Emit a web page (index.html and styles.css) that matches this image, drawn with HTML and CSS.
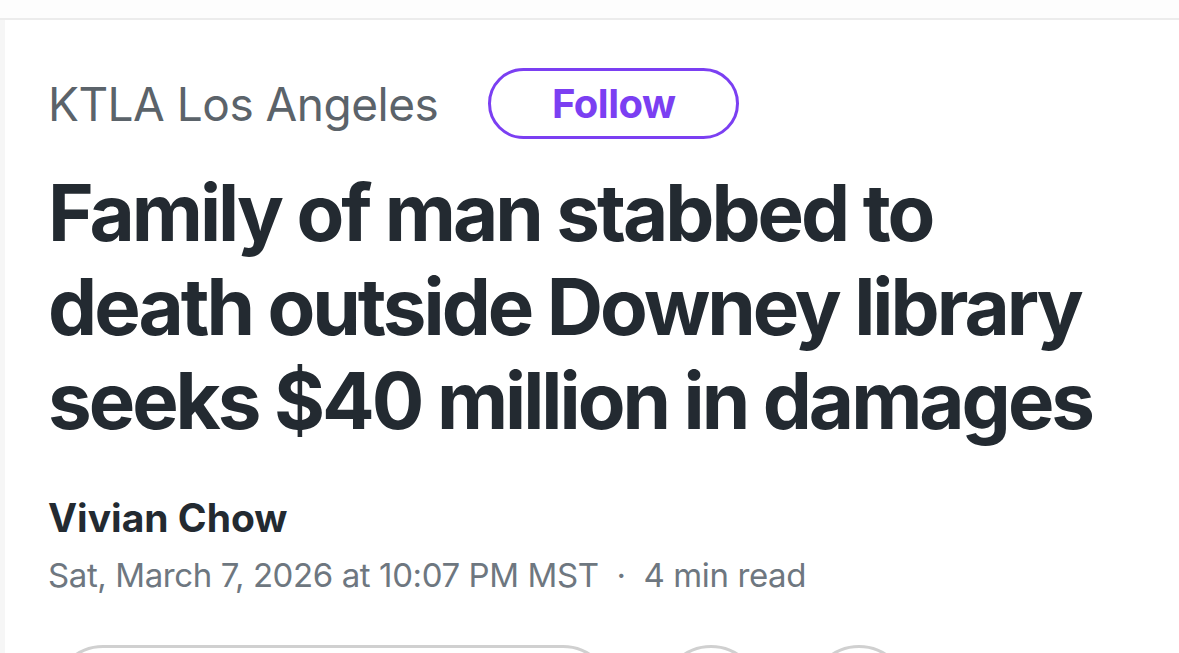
FILE: index.html
```html
<!DOCTYPE html>
<html lang="en">
<head>
  <meta charset="UTF-8">
  <title>Family of man stabbed to death outside Downey library - KTLA</title>
  <link rel="stylesheet" href="styles.css">
</head>
<body>

  <div class="top-bar"></div>

  <div class="article">
    <div class="provider">
      <span class="provider-name">KTLA Los Angeles</span>
      <button class="follow-btn">Follow</button>
    </div>

    <h1 class="headline">Family of man stabbed to death outside Downey library seeks $40 million in damages</h1>

    <div class="byline">
      <div class="author">Vivian Chow</div>
      <div class="meta">
        <span>Sat, March 7, 2026 at 10:07 PM MST</span>
        <span class="dot">·</span>
        <span>4 min read</span>
      </div>
    </div>

    <div class="actions">
      <div class="pill"></div>
      <div class="circle"></div>
      <div class="circle"></div>
    </div>
  </div>

</body>
</html>
```

FILE: styles.css
```css
body {
  margin: 0;
  background-color: #fff;
  font-family: Inter, "Noto Sans", sans-serif;
  overflow: hidden;
}
.top-bar {
  height: 18px;
  background-color: #fdfdfd;
  border-bottom: 2px solid #ececec;
}
.article {
  border-left: 5px solid #f6f6f6;
  padding: 48px 0 0 43px;
}
.provider {
  display: flex;
  align-items: center;
  gap: 50px;
}
.provider-name {
  font-size: 46px;
  color: #5b636a;
  letter-spacing: -0.5px;
}
.follow-btn {
  width: 251px;
  height: 71px;
  border: 3px solid #7b3ff2;
  border-radius: 36px;
  background: #fff;
  color: #7b3ff2;
  font-family: inherit;
  font-size: 40px;
  font-weight: 700;
  letter-spacing: -0.5px;
  padding: 0;
}
.headline {
  margin: 27px 0 0 0;
  font-size: 78px;
  line-height: 94px;
  font-weight: 700;
  color: #232a31;
  letter-spacing: -3px;
  max-width: 1100px;
}
.byline {
  margin-top: 47px;
}
.author {
  font-size: 39px;
  font-weight: 700;
  color: #232a31;
  line-height: 46px;
}
.meta {
  margin-top: 5px;
  font-size: 33px;
  color: #6e7780;
  letter-spacing: -0.4px;
  line-height: 58px;
}
.meta .dot {
  margin: 0 9px;
}
.actions {
  display: flex;
  gap: 48px;
  margin-top: 41px;
}
.pill {
  width: 560px;
  height: 100px;
  border: 3px solid #d0d0d0;
  border-radius: 50px;
  box-sizing: border-box;
  margin-left: 5px;
}
.circle {
  width: 100px;
  height: 100px;
  border: 3px solid #d0d0d0;
  border-radius: 50%;
  box-sizing: border-box;
}
```
